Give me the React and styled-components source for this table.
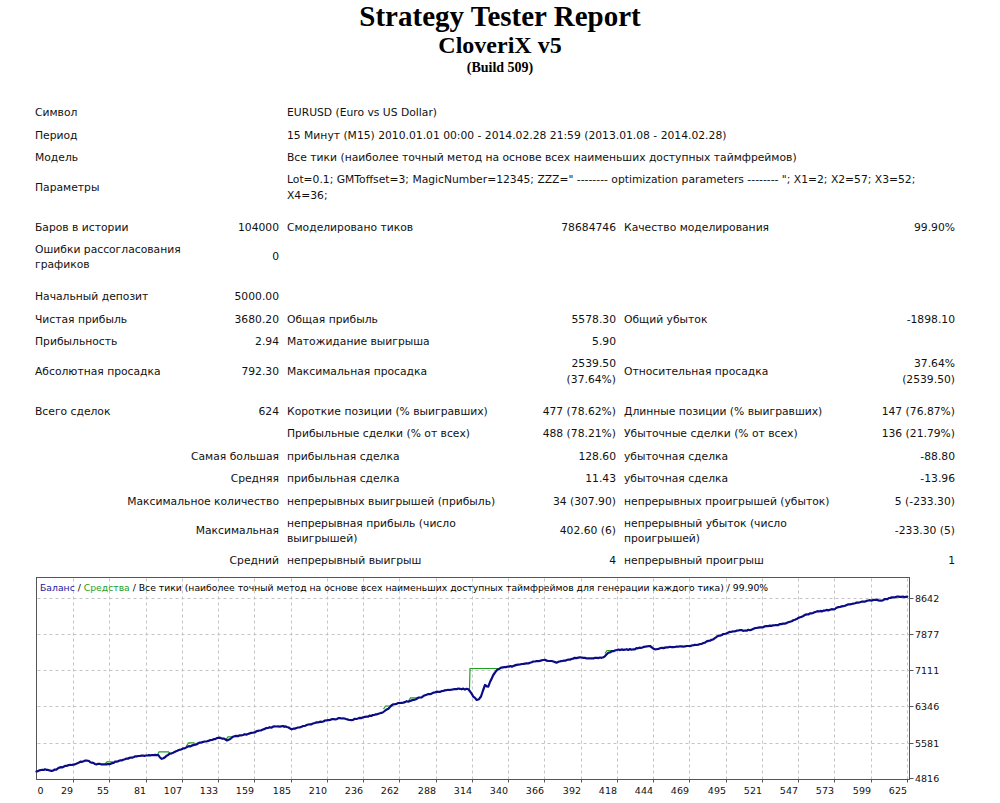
import React from 'react';
import styled, { createGlobalStyle } from 'styled-components';

const GlobalStyle = createGlobalStyle`
  html, body { margin: 0; padding: 0; background: #fff; }
  body { font-family: "DejaVu Sans", Verdana, sans-serif; color: #000; }
`;

const Page = styled.div`
  width: 1000px;
`;

const Header = styled.header`
  text-align: center;
  font-family: "Liberation Serif", "Times New Roman", serif;
  font-weight: bold;
  color: #000;
`;
const Title = styled.div`
  font-size: 29px;
  line-height: 32px;
`;
const Expert = styled.div`
  font-size: 24px;
  line-height: 26px;
`;
const Build = styled.div`
  font-size: 14px;
  line-height: 18px;
  margin-top: 1px;
`;

const Report = styled.div`
  margin: 24.5px 0 0 31px;
  width: 928px;
  font-size: 10.75px;
  color: #111;
`;
const Row = styled.div`
  display: grid;
  grid-template-columns: 160px 92px 237px 100px 235px 104px;
  height: ${(p) => (p.$tall ? 37 : 22.5)}px;
`;
const Gap = styled.div`
  height: 10px;
`;
const Cell = styled.div`
  grid-column: span ${(p) => p.$span || 1};
  padding: 0 4px;
  display: flex;
  align-items: center;
  justify-content: ${(p) => (p.$right ? 'flex-end' : 'flex-start')};
  text-align: ${(p) => (p.$right ? 'right' : 'left')};
  line-height: 15.5px;
  white-space: nowrap;
`;

const ChartSvg = styled.svg`
  display: block;
`;
const Legend = styled.text`
  font-family: "DejaVu Sans", Verdana, sans-serif;
  font-size: 9.25px;
  fill: #000;
`;
const AxisText = styled.text`
  font-family: "DejaVu Sans", Verdana, sans-serif;
  font-size: 9.5px;
  fill: #111;
`;

// [text, span, right]
const ROWS = [
  { cells: [['Символ', 2], ['EURUSD (Euro vs US Dollar)', 4]] },
  { cells: [['Период', 2], ['15 Минут (M15) 2010.01.01 00:00 - 2014.02.28 21:59 (2013.01.08 - 2014.02.28)', 4]] },
  { cells: [['Модель', 2], ['Все тики (наиболее точный метод на основе всех наименьших доступных таймфреймов)', 4]] },
  {
    tall: true,
    cells: [
      ['Параметры', 2],
      [['Lot=0.1; GMToffset=3; MagicNumber=12345; ZZZ=" -------- optimization parameters -------- "; X1=2; X2=57; X3=52;', 'X4=36;'], 4],
    ],
  },
  { gap: true },
  {
    cells: [
      ['Баров в истории', 1], ['104000', 1, true], ['Смоделировано тиков', 1], ['78684746', 1, true],
      ['Качество моделирования', 1], ['99.90%', 1, true],
    ],
  },
  { tall: true, cells: [[['Ошибки рассогласования', 'графиков'], 1], ['0', 1, true], ['', 4]] },
  { gap: true },
  { cells: [['Начальный депозит', 1], ['5000.00', 1, true], ['', 4]] },
  {
    cells: [
      ['Чистая прибыль', 1], ['3680.20', 1, true], ['Общая прибыль', 1], ['5578.30', 1, true],
      ['Общий убыток', 1], ['-1898.10', 1, true],
    ],
  },
  { cells: [['Прибыльность', 1], ['2.94', 1, true], ['Матожидание выигрыша', 1], ['5.90', 1, true], ['', 2]] },
  {
    tall: true,
    cells: [
      ['Абсолютная просадка', 1], ['792.30', 1, true], ['Максимальная просадка', 1], [['2539.50', '(37.64%)'], 1, true],
      ['Относительная просадка', 1], [['37.64%', '(2539.50)'], 1, true],
    ],
  },
  { gap: true },
  {
    cells: [
      ['Всего сделок', 1], ['624', 1, true], ['Короткие позиции (% выигравших)', 1], ['477 (78.62%)', 1, true],
      ['Длинные позиции (% выигравших)', 1], ['147 (76.87%)', 1, true],
    ],
  },
  {
    cells: [
      ['', 2], ['Прибыльные сделки (% от всех)', 1], ['488 (78.21%)', 1, true],
      ['Убыточные сделки (% от всех)', 1], ['136 (21.79%)', 1, true],
    ],
  },
  {
    cells: [
      ['Самая большая', 2, true], ['прибыльная сделка', 1], ['128.60', 1, true],
      ['убыточная сделка', 1], ['-88.80', 1, true],
    ],
  },
  {
    cells: [
      ['Средняя', 2, true], ['прибыльная сделка', 1], ['11.43', 1, true],
      ['убыточная сделка', 1], ['-13.96', 1, true],
    ],
  },
  {
    cells: [
      ['Максимальное количество', 2, true], ['непрерывных выигрышей (прибыль)', 1], ['34 (307.90)', 1, true],
      ['непрерывных проигрышей (убыток)', 1], ['5 (-233.30)', 1, true],
    ],
  },
  {
    tall: true,
    cells: [
      ['Максимальная', 2, true], [['непрерывная прибыль (число', 'выигрышей)'], 1], ['402.60 (6)', 1, true],
      [['непрерывный убыток (число', 'проигрышей)'], 1], ['-233.30 (5)', 1, true],
    ],
  },
  {
    cells: [
      ['Средний', 2, true], ['непрерывный выигрыш', 1], ['4', 1, true],
      ['непрерывный проигрыш', 1], ['1', 1, true],
    ],
  },
];

function CellText({ text }) {
  if (Array.isArray(text)) {
    return (
      <span>
        {text.map((t, i) => (
          <React.Fragment key={i}>
            {i > 0 && <br />}
            {t}
          </React.Fragment>
        ))}
      </span>
    );
  }
  return <span>{text}</span>;
}

// ---------- chart ----------
const BALANCE = [
  [36.5, 771.5], [41, 770], [45, 769.3], [49, 770.2], [53, 770.7], [58, 768.3], [64, 766.5], [71.7, 765],
  [79, 762.5], [86.7, 760.5], [89, 761], [91.7, 762.7], [95, 764], [101, 764.3], [108, 764], [112, 763.2],
  [116.7, 761.7], [125, 759.3], [131, 757.5], [138.3, 756], [146, 755.5], [152, 755], [158.3, 755],
  [160, 757.5], [161.7, 758.8], [163.5, 758.2], [165, 757.3], [168, 755], [171.7, 753.3], [176, 751.2],
  [181.7, 749.3], [186, 747.6], [191.7, 745.6], [198.3, 743.3], [205, 741.5], [212, 740], [220, 737.7],
  [224, 738.6], [227, 740.5], [230, 739.2], [233, 736.7], [243, 735], [253, 732.7], [263, 729.5],
  [273, 726.7], [283, 726], [287, 727], [291.7, 729.3], [298, 727.5], [306.7, 725], [313, 723.5],
  [320, 721.7], [330, 720], [340, 718.2], [346, 719], [350, 720], [358, 718.5], [366.7, 716.7], [374, 715],
  [380, 713.3], [384, 711.5], [386.7, 709.5], [390, 707], [393.3, 704.3], [400, 703], [410, 701],
  [420, 697.5], [433.3, 692.7], [443, 691], [453.3, 689.3], [460, 688.8], [468.3, 689.3], [470.5, 692],
  [473.3, 696.7], [476.7, 700], [479, 699.2], [481, 696.5], [483, 690.5], [485, 685], [487, 686.5],
  [488.3, 686.7], [490, 682], [493.3, 675], [497, 670], [500, 668.3], [506, 667.2], [513.3, 666],
  [520, 664.5], [526.7, 663.3], [535, 661.5], [543.3, 660], [550, 661], [556.7, 662.7], [561, 661.2],
  [566.7, 660], [573, 658.6], [580, 657.3], [585, 657.8], [590, 658.3], [597, 657.8], [603.3, 657.3],
  [606, 655], [608.3, 652.7], [612, 651.2], [616.7, 650], [625, 649.7], [633.3, 649.3], [641, 647.8],
  [650, 646], [652, 647.5], [655, 649.3], [660, 648.2], [666.7, 647.3], [675, 647], [683.3, 646.7],
  [692, 645.4], [700, 644], [710, 640.7], [716, 637.4], [723.3, 634], [731, 632], [740, 630], [743, 630.8],
  [746.7, 630.7], [753, 629], [760, 627.3], [768, 626.2], [776.7, 625], [783, 623.6], [790, 621.7],
  [800, 617.3], [810, 613.3], [816, 611.8], [823.3, 610.7], [833.3, 609.3], [840, 607], [846.7, 605],
  [855, 603.2], [863.3, 601.7], [873.3, 600], [877, 599.7], [880, 600.7], [886, 599], [893.3, 597.3],
  [900, 596.9], [907.3, 596.7],
];

const EQUITY_SEGMENTS = [
  [[105, 763.8], [107, 761.8], [113, 761.8]],
  [[157.5, 755], [159, 751.8], [168.5, 751.8], [170, 753.5]],
  [[186.5, 746], [188.5, 742.8], [194.5, 742.8]],
  [[226, 739.5], [228, 736.8], [233, 736.8]],
  [[383.5, 709], [385.5, 706], [392.5, 706]],
  [[408.5, 701], [410.5, 697.8], [418.5, 697.8]],
  [[467.5, 689.3], [469.5, 688.8], [470, 668.5], [500, 668.5]],
  [[605, 653.5], [607, 650.5], [612.5, 650.5]],
];

function densify(points, step, amp, seed) {
  let s = seed;
  const rnd = () => {
    s = (s * 1103515245 + 12345) % 2147483648;
    return s / 2147483648 - 0.5;
  };
  const out = [];
  for (let i = 0; i < points.length - 1; i++) {
    const [x0, y0] = points[i];
    const [x1, y1] = points[i + 1];
    const n = Math.max(1, Math.round((x1 - x0) / step));
    for (let k = 0; k < n; k++) {
      const t = k / n;
      const jitter = k === 0 ? 0 : rnd() * amp * 2;
      out.push([x0 + (x1 - x0) * t, y0 + (y1 - y0) * t + jitter]);
    }
  }
  out.push(points[points.length - 1]);
  return out.map(([x, y]) => `${x.toFixed(1)},${y.toFixed(1)}`).join(' ');
}

const X_LABELS = [29, 55, 81, 107, 133, 159, 185, 210, 236, 262, 288, 314, 340, 366, 392, 418, 444, 469, 495, 521, 547, 573, 599, 625];
const Y_LABELS = [8642, 7877, 7111, 6346, 5581];

const LEFT = 36.5;
const RIGHT = 909.5;
const TOP = 577.5;
const BOTTOM = 779.5;

function Chart() {
  const xs = X_LABELS.map((_, k) => Math.round(73 + 36.25 * k) + 0.5);
  const ys = Y_LABELS.map((_, j) => Math.round(597.5 + 36.25 * j) + 0.5);
  const balance = densify(BALANCE, 1.6, 0.5, 7);
  return (
    <ChartSvg width="1000" height="231" viewBox="0 572 1000 231">
      {xs.map((x, k) => (
        <line key={'vx' + k} x1={x} y1={TOP + 1} x2={x} y2={BOTTOM} stroke="#c4c4c4" strokeWidth="1" strokeDasharray="3 3" />
      ))}
      {ys.map((y, j) => (
        <line key={'hy' + j} x1={LEFT + 1} y1={y} x2={RIGHT} y2={y} stroke="#c4c4c4" strokeWidth="1" strokeDasharray="3 3" />
      ))}
      <rect x={LEFT} y={TOP} width={RIGHT - LEFT} height={BOTTOM - TOP} fill="none" stroke="#555" strokeWidth="1" />
      {ys.concat([BOTTOM - 1]).map((y, j) => (
        <line key={'ty' + j} x1={RIGHT} y1={y} x2={RIGHT + 4} y2={y} stroke="#555" strokeWidth="1" />
      ))}
      {xs.map((x, k) => (
        <line key={'tx' + k} x1={x} y1={BOTTOM} x2={x} y2={BOTTOM + 3} stroke="#555" strokeWidth="1" />
      ))}

      {EQUITY_SEGMENTS.map((seg, i) => (
        <polyline
          key={'eq' + i}
          points={seg.map(([x, y]) => `${x},${y}`).join(' ')}
          fill="none"
          stroke="#20a020"
          strokeWidth="1.2"
        />
      ))}
      <polyline points={balance} fill="none" stroke="#0b0b86" strokeWidth="2.2" strokeLinejoin="round" strokeLinecap="round" />

      <Legend x="40" y="590.5">
        <tspan fill="#1a1a9a">Баланс</tspan>
        <tspan> / </tspan>
        <tspan fill="#1fa01f">Средства</tspan>
        <tspan> / Все тики (наиболее точный метод на основе всех наименьших доступных таймфреймов для генерации каждого тика) / 99.90%</tspan>
      </Legend>

      <AxisText x="37.5" y="794">0</AxisText>
      {xs.map((x, k) => (
        <AxisText key={'xl' + k} x={x - 0.5} y="794" textAnchor="end">
          {X_LABELS[k]}
        </AxisText>
      ))}
      {ys.map((y, j) => (
        <AxisText key={'yl' + j} x="915" y={y + 3.5}>
          {Y_LABELS[j]}
        </AxisText>
      ))}
      <AxisText x="915" y={BOTTOM + 2}>4816</AxisText>
    </ChartSvg>
  );
}

export default function App() {
  return (
    <Page>
      <GlobalStyle />
      <Header>
        <Title>Strategy Tester Report</Title>
        <Expert>CloveriX v5</Expert>
        <Build>(Build 509)</Build>
      </Header>
      <Report>
        {ROWS.map((row, i) =>
          row.gap ? (
            <Gap key={i} />
          ) : (
            <Row key={i} $tall={row.tall}>
              {row.cells.map(([text, span, right], j) => (
                <Cell key={j} $span={span} $right={right}>
                  <CellText text={text} />
                </Cell>
              ))}
            </Row>
          )
        )}
      </Report>
      <Chart />
    </Page>
  );
}
